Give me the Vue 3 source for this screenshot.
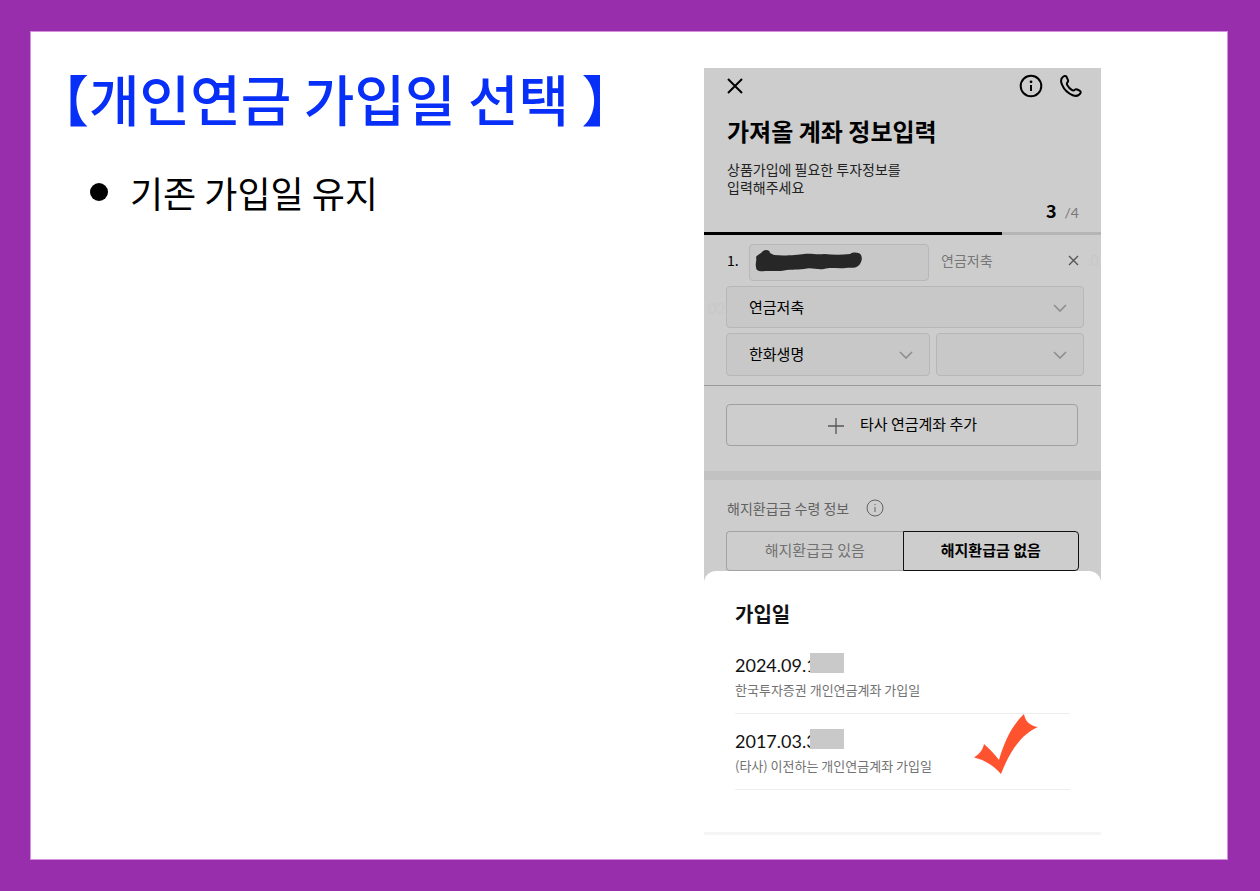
<script setup>
import { ref } from 'vue'

const refund = ref('none')
const joinDates = [
  { date: '2024.09.1', label: '한국투자증권 개인연금계좌 가입일', checked: false },
  { date: '2017.03.3', label: '(타사) 이전하는 개인연금계좌 가입일', checked: true },
]
</script>

<template>
  <main class="page">
    <div class="slide">
      <section class="notes">
        <h1>【개인연금 가입일 선택 】</h1>
        <ul>
          <li><span class="bullet"></span>기존 가입일 유지</li>
        </ul>
      </section>

      <section class="phone">
        <div class="dimmed">
          <header class="topbar">
            <button type="button" aria-label="닫기">
              <svg width="16" height="16" viewBox="0 0 16 16"><path d="M1 1 15 15M15 1 1 15" /></svg>
            </button>
            <div class="actions">
              <button type="button" aria-label="안내">
                <svg width="24" height="24" viewBox="0 0 24 24"><circle cx="12" cy="12" r="10.3" /><path d="M12 11v6" /><circle class="dot" cx="12" cy="7.8" r="1.4" /></svg>
              </button>
              <button type="button" aria-label="전화">
                <svg width="24" height="24" viewBox="0 0 24 24"><path d="M4.400 2.500C2 4 1.500 7 3 10.700C5 15.400 9 19.400 13.700 21.200C17.300 22.500 20 21.700 21.400 19.300C22 18.200 21.600 17.200 20.600 16.700L18.200 15.500C17.200 15 16.400 15.200 15.700 15.900C14.900 16.700 14 16.700 12.800 15.900C10.900 14.700 9.300 12.900 8.200 10.900C7.600 9.800 7.700 9.100 8.500 8.300C9.200 7.600 9.300 6.800 8.900 5.900L7.800 3.300C7.200 1.900 5.700 1.700 4.400 2.500Z" /></svg>
              </button>
            </div>
          </header>

          <div class="intro">
            <h2>가져올 계좌 정보입력</h2>
            <p>상품가입에 필요한 투자정보를<br />입력해주세요</p>
            <div class="step"><strong>3</strong><span>/4</span></div>
          </div>
          <div class="progress"><div></div></div>

          <form class="accounts" @submit.prevent>
            <span class="ghost start" aria-hidden="true">02</span>
            <span class="ghost end" aria-hidden="true">.0</span>
            <div class="account">
              <label for="account">1.</label>
              <div class="masked">
                <input id="account" type="text" />
                <svg class="scribble" width="108" height="24" viewBox="0 0 108 24"><path d="M1 8C3 5 6 5 8 2C11 0 15 1 15 4L19 6C29 7 42 6 49 5C56 4 61 6 69 5C78 6 87 6 95 5C98 3 104 3 106 6C108 10 106 15 103 17C99 20 95 18 91 19C82 20 76 18 69 20C61 21 57 18 49 20C41 21 34 20 26 22C18 22 14 22 10 22C5 23 1 22 1 18C0 14 2 12 1 8Z" /></svg>
              </div>
              <span class="kind">연금저축</span>
              <button type="button" aria-label="삭제">
                <svg width="11" height="11" viewBox="0 0 11 11"><path d="M1 1 10 10M10 1 1 10" /></svg>
              </button>
            </div>
            <div class="select wide">
              <select aria-label="계좌 종류"><option>연금저축</option></select>
              <svg width="14" height="8" viewBox="0 0 14 8"><path d="M1 1 7 7 13 1" /></svg>
            </div>
            <div class="pair">
              <div class="select">
                <select aria-label="금융기관"><option>한화생명</option></select>
                <svg width="14" height="8" viewBox="0 0 14 8"><path d="M1 1 7 7 13 1" /></svg>
              </div>
              <div class="select">
                <select aria-label="지점"><option></option></select>
                <svg width="14" height="8" viewBox="0 0 14 8"><path d="M1 1 7 7 13 1" /></svg>
              </div>
            </div>
          </form>

          <div class="add">
            <button type="button">
              <svg width="18" height="18" viewBox="0 0 18 18"><path d="M9 1V17M1 9H17" /></svg>
              타사 연금계좌 추가
            </button>
          </div>

          <div class="refund">
            <div class="caption">
              해지환급금 수령 정보
              <svg width="18" height="18" viewBox="0 0 18 18"><circle cx="9" cy="9" r="8" /><path d="M9 8v5M9 5v1.200" /></svg>
            </div>
            <div class="segments">
              <button type="button" :class="{ on: refund === 'some' }" @click="refund = 'some'">해지환급금 있음</button>
              <button type="button" :class="{ on: refund === 'none' }" @click="refund = 'none'">해지환급금 없음</button>
            </div>
          </div>
        </div>

        <div class="sheet">
          <h3>가입일</h3>
          <ul>
            <li v-for="item in joinDates" :key="item.date">
              <div class="date">{{ item.date }}<span class="cover"></span></div>
              <div class="label">{{ item.label }}</div>
              <svg v-if="item.checked" class="check" width="64" height="60" viewBox="0 0 64 60"><path d="M0 43.500C6 40 9 35 10 30C16 35 21 41 25 46C30 28 38 11 50 0C51 7 56 12 64 13C47 20 35 39 27 60C20 52 11 46 0 43.500Z" /></svg>
            </li>
          </ul>
        </div>
      </section>
    </div>
  </main>
</template>

<style>
body {
  margin: 0;
}
</style>

<style scoped>
* {
  box-sizing: border-box;
}

.page {
  min-height: 100vh;
  padding: 31px 32px 31px 30px;
  display: flex;
  background: #992eac;
  font-family: "Noto Sans CJK KR", sans-serif;
  color: #000;
}

h1, h2, h3, p, ul {
  margin: 0;
  padding: 0;
}

ul {
  list-style: none;
}

button, input, select {
  margin: 0;
  padding: 0;
  border: 0;
  background: none;
  font: inherit;
  color: inherit;
}

svg {
  display: block;
  fill: none;
  stroke: currentColor;
  stroke-width: 2;
}

.slide {
  flex: 1;
  display: grid;
  grid-template-columns: 673fr 397fr 126fr;
  align-items: start;
  padding: 36px 0 23px;
  border: 1px solid #d292dc;
  background: #fff;
}

.notes h1 {
  margin-left: 3px;
  color: #082ff8;
  font-size: 55px;
  font-weight: 500;
  line-height: 58px;
  white-space: nowrap;
}

.notes ul {
  margin: 42px 0 0 59px;
}

.notes li {
  display: flex;
  align-items: center;
  font-size: 36px;
  line-height: 48px;
}

.bullet {
  width: 18px;
  height: 18px;
  margin-right: 22px;
  border-radius: 50%;
  background: #000;
}

.phone {
  border-bottom: 3px solid #f5f5f5;
}

.dimmed {
  padding-bottom: 12px;
  margin-bottom: -12px;
  background: #cdcdcd;
}

.topbar {
  display: flex;
  justify-content: space-between;
  align-items: center;
  height: 36px;
  padding: 0 18px 0 23px;
}

.actions {
  display: flex;
  gap: 16px;
}

.dot {
  fill: currentColor;
  stroke: none;
}

.intro {
  padding: 10px 22px 8px 23px;
}

.intro h2 {
  font-size: 24px;
  font-weight: 700;
  line-height: 34px;
}

.intro p {
  margin-top: 12px;
  font-size: 14px;
  line-height: 18px;
  color: #222;
}

.step {
  display: flex;
  justify-content: flex-end;
  align-items: baseline;
  gap: 8px;
  margin-top: 3px;
  font-family: Lato, sans-serif;
  line-height: 23px;
}

.step strong {
  font-family: "Noto Sans CJK KR", sans-serif;
  font-size: 18px;
}

.step span {
  font-size: 14px;
  color: #777;
}

.progress {
  height: 3px;
  background: #b5b5b6;
}

.progress div {
  width: 75%;
  height: 100%;
  background: #000;
}

.accounts {
  position: relative;
  display: flex;
  flex-direction: column;
  gap: 5px;
  padding: 9px 17px 9px 22px;
  border-bottom: 1px solid #999c9c;
  font-size: 15px;
}

.ghost {
  position: absolute;
  font-family: Lato, sans-serif;
  line-height: 20px;
  color: #c8c8c8;
}

.ghost.start {
  left: 4px;
  top: 63px;
}

.ghost.end {
  right: 2px;
  top: 15px;
}

.account {
  display: flex;
  align-items: center;
  height: 37px;
  padding-right: 5px;
}

.account label {
  width: 23px;
  padding: 0 0 5px 1px;
  font-size: 14px;
}

.account button {
  margin-left: auto;
  padding-bottom: 5px;
  color: #555;
}

.account button svg {
  stroke-width: 1.4;
}

.masked {
  position: relative;
  width: 51%;
}

.masked input {
  display: block;
  width: 100%;
  height: 37px;
  border: 1px solid #b7b7b9;
  border-radius: 4px;
  background: #c8c8c8;
}

.scribble {
  position: absolute;
  left: 6px;
  top: 5px;
  fill: #272727;
  stroke: none;
}

.kind {
  margin-left: 12px;
  padding-bottom: 5px;
  font-size: 14px;
  color: #777;
}

.select {
  position: relative;
}

.select select {
  display: block;
  width: 100%;
  height: 43px;
  padding: 0 40px 2px 22px;
  border: 1px solid #b7b7b9;
  border-radius: 4px;
  background: #c8c8c8;
  appearance: none;
}

.wide select {
  height: 42px;
}

.select svg {
  position: absolute;
  right: 17px;
  top: 18px;
  color: #8b8d8f;
  stroke-width: 1.6;
  pointer-events: none;
}

.pair {
  display: grid;
  grid-template-columns: 204fr 148fr;
  gap: 6px;
}

.add {
  padding: 18px 23px 25px 22px;
  border-bottom: 9px solid #c2c2c2;
}

.add button {
  display: flex;
  align-items: center;
  justify-content: center;
  gap: 15px;
  width: 100%;
  height: 42px;
  padding-bottom: 4px;
  border: 1px solid #a0a0a0;
  border-radius: 4px;
  font-size: 15px;
}

.add svg {
  margin-top: 5px;
  color: #555;
  stroke-width: 1.3;
}

.refund {
  padding: 18px 22px 0;
}

.caption {
  display: flex;
  align-items: center;
  gap: 17px;
  height: 20px;
  padding-left: 1px;
  font-size: 14px;
  color: #626262;
}

.caption svg {
  stroke-width: 1;
}

.segments {
  display: grid;
  grid-template-columns: 1fr 1fr;
  height: 40px;
  margin-top: 13px;
}

.segments button {
  padding-bottom: 4px;
  border: 1px solid #a3a3a3;
  border-right: 0;
  border-radius: 4px 0 0 4px;
  font-size: 15px;
  color: #717171;
}

.segments button.on {
  border: 1px solid #111;
  border-radius: 0 4px 4px 0;
  font-weight: 700;
  color: #000;
}

.sheet {
  position: relative;
  padding: 28px 31px 42px;
  border-radius: 12px 12px 0 0;
  background: #fff;
}

.sheet h3 {
  font-size: 20px;
  font-weight: 700;
  line-height: 30px;
  color: #111;
}

.sheet ul {
  margin-top: 9px;
}

.sheet li {
  position: relative;
  height: 76px;
  padding-top: 15px;
  border-bottom: 1px solid #eee;
}

.date {
  position: relative;
  width: max-content;
  font-family: Lato, sans-serif;
  font-size: 18px;
  line-height: 24px;
  color: #111;
}

.cover {
  position: absolute;
  left: 75px;
  top: 0;
  width: 34px;
  height: 20px;
  background: #c9c9c9;
}

.label {
  margin-top: 3px;
  font-size: 13px;
  line-height: 20px;
  color: #727272;
}

.check {
  position: absolute;
  right: 32px;
  top: 0;
  fill: #ff5330;
  stroke: none;
}
</style>
